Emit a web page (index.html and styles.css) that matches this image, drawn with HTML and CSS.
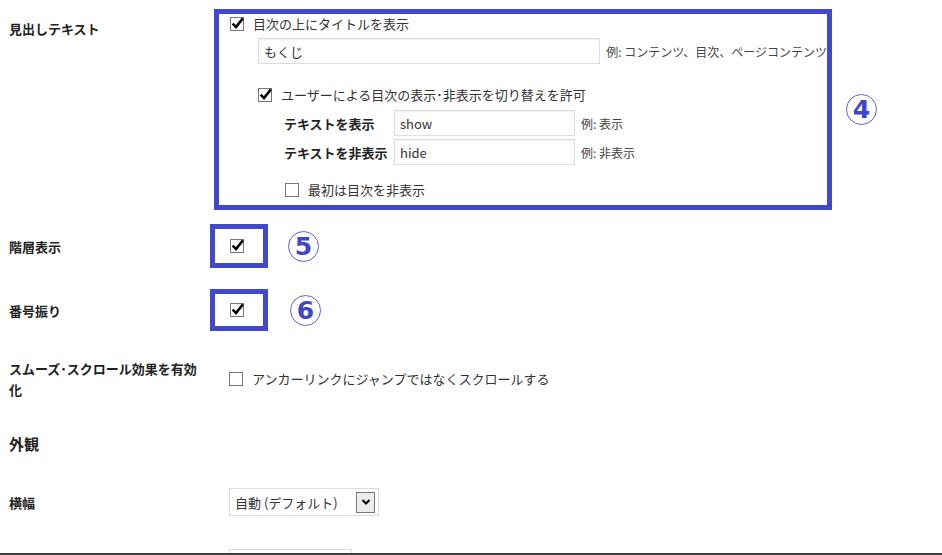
FILE: index.html
```html
<!DOCTYPE html>
<html lang="ja">
<head>
  <meta charset="UTF-8" />
  <title>目次の設定</title>
  <link rel="stylesheet" href="styles.css">
</head>
<body>
<div class="page">

  <div class="form-row row-heading-text">
    <div class="row-label">見出しテキスト</div>
    <div class="row-field">
      <div class="mark-box box-wide">
        <label class="check-line line-title">
          <span class="cb"><svg viewBox="0 0 14 14"><path d="M2.5 7.2 L5.6 10.4 L12 2.2" /></svg></span>
          目次の上にタイトルを表示
        </label>
        <div class="input-line">
          <input class="text-input input-title" type="text" value="もくじ">
          <span class="example">例: コンテンツ、目次、ページコンテンツ</span>
        </div>
        <label class="check-line line-toggle">
          <span class="cb"><svg viewBox="0 0 14 14"><path d="M2.5 7.2 L5.6 10.4 L12 2.2" /></svg></span>
          ユーザーによる目次の表示･非表示を切り替えを許可
        </label>
        <div class="toggle-grid">
          <span class="sub-label">テキストを表示</span>
          <input class="text-input input-short" type="text" value="show">
          <span class="example">例: 表示</span>
          <span class="sub-label">テキストを非表示</span>
          <input class="text-input input-short" type="text" value="hide">
          <span class="example">例: 非表示</span>
        </div>
        <label class="check-line line-hidden">
          <span class="cb"></span>
          最初は目次を非表示
        </label>
      </div>
      <span class="marker marker-4">4</span>
    </div>
  </div>

  <div class="form-row row-hierarchy">
    <div class="row-label">階層表示</div>
    <div class="row-field">
      <div class="mark-box box-small box-5">
        <span class="cb"><svg viewBox="0 0 14 14"><path d="M2.5 7.2 L5.6 10.4 L12 2.2" /></svg></span>
      </div>
      <span class="marker marker-5">5</span>
    </div>
  </div>

  <div class="form-row row-numbers">
    <div class="row-label">番号振り</div>
    <div class="row-field">
      <div class="mark-box box-small box-6">
        <span class="cb"><svg viewBox="0 0 14 14"><path d="M2.5 7.2 L5.6 10.4 L12 2.2" /></svg></span>
      </div>
      <span class="marker marker-6">6</span>
    </div>
  </div>

  <div class="form-row row-smooth">
    <div class="row-label">スムーズ･スクロール効果を有効化</div>
    <div class="row-field padded">
      <label class="check-line">
        <span class="cb"></span>
        アンカーリンクにジャンプではなくスクロールする
      </label>
    </div>
  </div>

  <h3 class="section-title">外観</h3>

  <div class="form-row row-width">
    <div class="row-label">横幅</div>
    <div class="row-field padded">
      <div class="select">
        <span>自動 (デフォルト)</span>
        <span class="select-arrow"><svg viewBox="0 0 10 8"><path d="M1.5 2 L5 5.5 L8.5 2" /></svg></span>
      </div>
    </div>
  </div>

  <div class="form-row row-next">
    <div class="row-label"></div>
    <div class="row-field padded">
      <div class="select select-next">
        <span></span>
        <span class="select-arrow"></span>
      </div>
    </div>
  </div>

</div>
</body>
</html>
```

FILE: styles.css
```css
body {
  margin: 0;
  background: #fff;
  color: #333;
  font-family: "Noto Sans CJK JP", "Noto Sans", sans-serif;
  font-size: 13px;
}

.page {
  height: 555px;
  overflow: hidden;
  border-bottom: 2px solid #3a3a3a;
  box-sizing: border-box;
}

.form-row {
  display: grid;
  grid-template-columns: 219px 1fr;
  align-items: center;
}

.row-label {
  padding: 0 10px 0 9px;
  font-weight: bold;
  color: #222;
  line-height: 21px;
}

.row-field {
  display: flex;
  align-items: center;
}

.row-field.padded {
  padding-left: 10px;
}

/* row 1 */
.row-heading-text {
  align-items: start;
}

.row-heading-text .row-label {
  padding-top: 19px;
  line-height: 20px;
}

.row-heading-text .row-field {
  padding-top: 9px;
  gap: 14px;
}

.mark-box {
  border: 5px solid #4048cc;
  box-sizing: border-box;
}

.box-wide {
  width: 618px;
  margin-left: -5px;
  padding: 0 0 5px 11px;
}

.check-line {
  display: flex;
  align-items: center;
  gap: 9px;
  height: 20px;
  line-height: 20px;
  white-space: nowrap;
}

.cb {
  display: inline-block;
  width: 14px;
  height: 14px;
  border: 1px solid #777;
  background: #fff;
  box-sizing: border-box;
  flex: none;
  position: relative;
}

.cb svg {
  position: absolute;
  left: -1px;
  top: -2px;
  width: 15px;
  height: 15px;
  overflow: visible;
}

.cb path {
  fill: none;
  stroke: #000;
  stroke-width: 2.4;
  stroke-linejoin: miter;
}

.input-line {
  display: flex;
  align-items: center;
  gap: 6px;
  margin: 4px 0 0 28px;
}

.text-input {
  height: 26px;
  padding: 0 5px;
  border: 1px solid #ddd;
  box-shadow: inset 0 1px 2px rgba(0, 0, 0, 0.07);
  box-sizing: border-box;
  font-family: "Noto Sans CJK JP", "Noto Sans", sans-serif;
  font-size: 13px;
  color: #333;
  background: #fff;
}

.input-title {
  width: 349px;
}

.input-short {
  width: 181px;
}

.example {
  font-size: 12px;
  color: #444;
  white-space: nowrap;
}

.line-toggle {
  margin: 21px 0 0 28px;
}

.toggle-grid {
  display: grid;
  grid-template-columns: 104px 181px auto;
  grid-auto-rows: 26px;
  row-gap: 3px;
  column-gap: 6px;
  align-items: center;
  margin: 5px 0 0 54px;
}

.toggle-grid .sub-label {
  font-weight: bold;
  color: #222;
  white-space: nowrap;
}

.line-hidden {
  margin: 15px 0 0 55px;
}

.marker {
  display: inline-flex;
  align-items: center;
  justify-content: center;
  width: 31px;
  height: 31px;
  border: 1px solid #5c62e8;
  border-radius: 50%;
  box-sizing: border-box;
  color: #3f46c9;
  font-family: "DejaVu Sans", sans-serif;
  font-weight: bold;
  font-size: 25px;
  line-height: 1;
}

/* rows 2 and 3 */
.box-small {
  margin-left: -9px;
  padding: 10px 19px 10px 15px;
  line-height: 0;
}

.box-6 {
  padding: 9px 19px 9px 15px;
}

.row-hierarchy {
  padding-top: 14px;
}

.row-hierarchy .row-field {
  gap: 20px;
}

.row-numbers {
  padding-top: 21px;
}

.row-numbers .row-field {
  gap: 22px;
}

.row-smooth {
  padding-top: 27px;
}

.section-title {
  margin: 0;
  padding: 33px 0 0 9px;
  font-size: 15px;
  line-height: 22px;
  color: #222;
}

.row-width {
  padding-top: 33px;
}

.select {
  display: flex;
  align-items: center;
  justify-content: space-between;
  width: 150px;
  height: 28px;
  padding: 0 3px 0 5px;
  border: 1px solid #ddd;
  box-sizing: border-box;
  font-size: 13px;
  color: #333;
  background: #fff;
}

.select-arrow {
  width: 19px;
  height: 21px;
  border: 1px solid #7a7a7a;
  background: #ececec;
  box-sizing: border-box;
  display: flex;
  align-items: center;
  justify-content: center;
}

.select-arrow svg {
  width: 10px;
  height: 8px;
}

.select-arrow path {
  fill: none;
  stroke: #000;
  stroke-width: 2;
}

.row-next {
  padding-top: 33px;
}

.select-next {
  width: 123px;
}
```
